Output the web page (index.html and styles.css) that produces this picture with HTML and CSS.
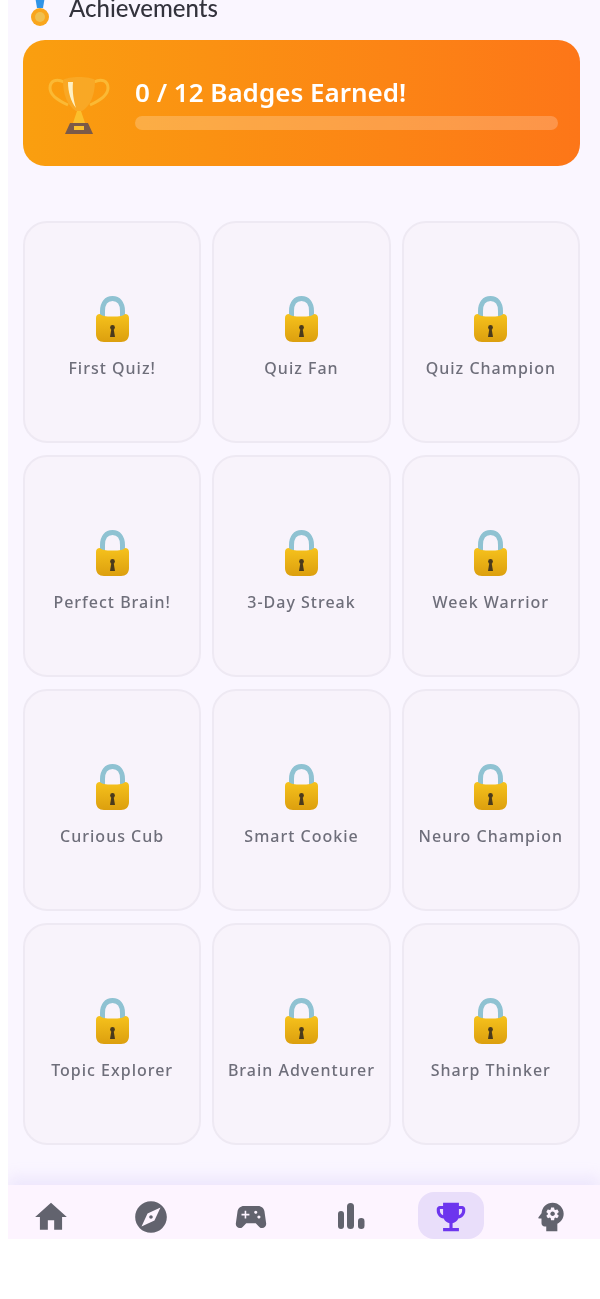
FILE: index.html
```html
<!DOCTYPE html>
<html>
  <head>
    <title>Achievements</title>
    <link rel="stylesheet" href="styles.css">
  </head>
  <body>
    <svg class="defs" width="0" height="0">
      <defs>
        <linearGradient id="lock-body" x1="0" y1="0" x2="0" y2="1">
          <stop offset="0" stop-color="#f6c21c"/>
          <stop offset="1" stop-color="#dc9f0e"/>
        </linearGradient>
      </defs>
      <symbol id="lock" viewBox="0 0 33 46">
        <path d="M6.500 24V15C6.500 7 10.500 2.500 16.500 2.500S26.500 7 26.500 15V24" fill="none" stroke="#8fc2d2" stroke-width="5"/>
        <path d="M4 18C6 20 9 20.500 16.500 20.500S27 20 29 18C31.500 18 33 19.500 33 22V38C33 43 30 46 25 46H8C3 46 0 43 0 38V22C0 19.500 1.500 18 4 18Z" fill="url(#lock-body)"/>
        <circle cx="16.500" cy="31.500" r="2.400" fill="#4a3a1c"/>
        <path d="M15.500 32H17.500L19 41H14Z" fill="#4a3a1c"/>
      </symbol>
    </svg>

    <div class="app">
      <div class="page">
        <div class="page-head">
          <svg class="medal" viewBox="0 0 24 26">
            <path d="M7 -4H17L15 8H9Z" fill="#2f94e6"/>
            <circle cx="12" cy="17" r="9" fill="#f9a61c"/>
            <circle cx="12" cy="17" r="5" fill="#f0c04e"/>
          </svg>
          <h1 class="page-title">Achievements</h1>
        </div>

        <div class="hero">
          <svg class="hero-trophy" viewBox="0 0 62 62">
            <path d="M16 7C8 3 2 6 2 13C2 21 11 26 20 30" fill="none" stroke="#fbb934" stroke-width="3"/>
            <path d="M46 7C54 3 60 6 60 13C60 21 51 26 42 30" fill="none" stroke="#fbb934" stroke-width="3"/>
            <path d="M15 5C20 1 42 1 47 5C47 21 42 31 34 36H28C20 31 15 21 15 5Z" fill="#f9a825"/>
            <path d="M20 7H25C24 17 26 27 28 33C23 27 20 17 20 7Z" fill="#fff1c4"/>
            <path d="M29 36H33L37 48H25Z" fill="#fbbf2d"/>
            <path d="M22 48H40L45 59H17Z" fill="#7b5a48"/>
            <rect x="26" y="51" width="10" height="4" fill="#fbc02d"/>
          </svg>
          <div class="hero-body">
            <div class="hero-title">0 / 12 Badges Earned!</div>
            <div class="hero-bar"></div>
          </div>
        </div>

        <div class="badges">
          <div class="badge"><svg class="badge-lock"><use href="#lock"/></svg><span class="badge-name">First Quiz!</span></div>
          <div class="badge"><svg class="badge-lock"><use href="#lock"/></svg><span class="badge-name">Quiz Fan</span></div>
          <div class="badge"><svg class="badge-lock"><use href="#lock"/></svg><span class="badge-name">Quiz Champion</span></div>
          <div class="badge"><svg class="badge-lock"><use href="#lock"/></svg><span class="badge-name">Perfect Brain!</span></div>
          <div class="badge"><svg class="badge-lock"><use href="#lock"/></svg><span class="badge-name">3-Day Streak</span></div>
          <div class="badge"><svg class="badge-lock"><use href="#lock"/></svg><span class="badge-name">Week Warrior</span></div>
          <div class="badge"><svg class="badge-lock"><use href="#lock"/></svg><span class="badge-name">Curious Cub</span></div>
          <div class="badge"><svg class="badge-lock"><use href="#lock"/></svg><span class="badge-name">Smart Cookie</span></div>
          <div class="badge"><svg class="badge-lock"><use href="#lock"/></svg><span class="badge-name">Neuro Champion</span></div>
          <div class="badge"><svg class="badge-lock"><use href="#lock"/></svg><span class="badge-name">Topic Explorer</span></div>
          <div class="badge"><svg class="badge-lock"><use href="#lock"/></svg><span class="badge-name">Brain Adventurer</span></div>
          <div class="badge"><svg class="badge-lock"><use href="#lock"/></svg><span class="badge-name">Sharp Thinker</span></div>
        </div>
      </div>

      <div class="nav">
        <div class="nav-item">
          <svg class="nav-icon" viewBox="0 0 24 24"><path d="M10 20v-6h4v6h5v-8h3L12 3 2 12h3v8z"/></svg>
        </div>
        <div class="nav-item">
          <svg class="nav-icon" viewBox="0 0 24 24"><path d="M12 10.900c-.61 0-1.100.49-1.100 1.100s.49 1.100 1.100 1.100c.61 0 1.100-.49 1.100-1.100s-.49-1.100-1.100-1.100zM12 2C6.480 2 2 6.480 2 12s4.480 10 10 10 10-4.480 10-10S17.520 2 12 2zm2.190 12.190L6 18l3.810-8.190L18 6l-3.810 8.190z"/></svg>
        </div>
        <div class="nav-item">
          <svg class="nav-icon" viewBox="0 0 24 24"><path d="M21.580 16.090l-1.090-7.660C20.210 6.460 18.520 5 16.530 5H7.470C5.480 5 3.790 6.460 3.510 8.430l-1.090 7.660C2.200 17.630 3.390 19 4.940 19c.68 0 1.320-.27 1.800-.75L9 16h6l2.250 2.250c.48.48 1.130.75 1.800.75 1.560 0 2.750-1.370 2.530-2.910zM11 11H9v2H8v-2H6v-1h2V8h1v2h2v1zm4-1c-.55 0-1-.45-1-1s.45-1 1-1 1 .45 1 1-.45 1-1 1zm2 3c-.55 0-1-.45-1-1s.45-1 1-1 1 .45 1 1-.45 1-1 1z"/></svg>
        </div>
        <div class="nav-item">
          <svg class="nav-icon" viewBox="0 0 38 38">
            <rect x="6" y="13" width="6" height="18" rx="3"/>
            <rect x="15" y="5" width="7" height="26" rx="3.500"/>
            <rect x="26" y="20" width="6.500" height="11" rx="3.200"/>
          </svg>
        </div>
        <div class="nav-item nav-item-active">
          <svg class="nav-icon" viewBox="0 0 24 24"><path d="M19 5h-2V3H7v2H5c-1.100 0-2 .9-2 2v1c0 2.550 1.920 4.630 4.390 4.940.63 1.500 1.980 2.630 3.610 2.960V19H7v2h10v-2h-4v-3.100c1.630-.33 2.980-1.460 3.610-2.960C19.080 12.630 21 10.550 21 8V7c0-1.100-.9-2-2-2zM5 8V7h2v3.820C5.840 10.400 5 9.300 5 8zm14 0c0 1.300-.84 2.400-2 2.820V7h2v1z"/></svg>
        </div>
        <div class="nav-item">
          <svg class="nav-icon" viewBox="0 0 24 24"><path d="M13 8.570c-.79 0-1.430.64-1.430 1.430s.64 1.430 1.430 1.430 1.430-.64 1.430-1.430-.64-1.430-1.430-1.430z"/><path d="M13 3C9.250 3 6.200 5.940 6.020 9.640L4.100 12.200c-.25.33-.01.8.4.8H6v3c0 1.100.9 2 2 2h1v3h7v-4.680c2.360-1.120 4-3.530 4-6.320 0-3.870-3.130-7-7-7zm3 7c0 .13-.01.26-.03.38l.83.66c.07.06.09.16.04.25l-.8 1.390c-.05.09-.16.12-.24.09l-.99-.4c-.21.16-.43.29-.67.39L14 13.830c-.01.1-.1.17-.2.17h-1.600c-.1 0-.18-.07-.2-.17l-.15-1.060c-.25-.1-.47-.23-.68-.39l-.99.4c-.09.03-.2 0-.25-.09l-.8-1.390c-.05-.08-.03-.19.04-.25l.84-.66c-.02-.12-.03-.25-.03-.38 0-.13.02-.26.04-.38l-.85-.66c-.07-.06-.09-.16-.04-.25l.8-1.390c.05-.09.15-.12.24-.09l1 .4c.2-.15.43-.29.67-.39l.15-1.060c.02-.1.1-.17.2-.17h1.600c.1 0 .18.07.2.17l.15 1.060c.24.1.46.23.67.39l1-.4c.09-.03.2 0 .25.09l.8 1.390c.05.09.03.19-.04.25l-.85.66c.03.12.04.25.04.38z"/></svg>
        </div>
      </div>
    </div>
  </body>
</html>
```

FILE: styles.css
```css
html, body {
  margin: 0;
  background: #fff;
}

body {
  height: 1299px;
  overflow: hidden;
  font-family: "Noto Sans", "Lato", sans-serif;
}

.defs {
  display: block;
}

/* the reference is a soft video frame, hence the slight blur */
.app {
  margin-left: 8px;
  height: 1239px;
  display: flex;
  flex-direction: column;
  overflow: hidden;
  background: #faf6ff;
  filter: blur(.5px);
}

.page {
  flex: 1;
  padding: 0 20px 0 15px;
}

.page-head {
  height: 40px;
  display: flex;
  align-items: flex-start;
  gap: 17px;
  padding-left: 5px;
}

.medal {
  width: 24px;
  height: 26px;
  flex: none;
}

.page-title {
  margin: 0;
  font-family: "Lato", sans-serif;
  font-size: 24px;
  line-height: 16px;
  font-weight: 500;
  color: #33333d;
}

.hero {
  height: 126px;
  display: flex;
  align-items: center;
  gap: 25px;
  padding: 0 22px 0 25px;
  border-radius: 22px;
  background: linear-gradient(90deg, #fa9f0f, #fd7618);
}

.hero-trophy {
  width: 62px;
  height: 62px;
  margin-top: 5px;
  flex: none;
}

.hero-body {
  flex: 1;
}

.hero-title {
  font-size: 26px;
  line-height: 32px;
  font-weight: 600;
  color: #fff;
}

.hero-bar {
  height: 14px;
  margin-top: 8px;
  border-radius: 7px;
  background: rgba(255, 255, 255, .22);
}

.badges {
  margin-top: 55px;
  display: grid;
  grid-template-columns: repeat(3, 1fr);
  gap: 12px 11px;
}

.badge {
  height: 222px;
  box-sizing: border-box;
  padding-top: 11px;
  display: flex;
  flex-direction: column;
  align-items: center;
  justify-content: center;
  gap: 15px;
  border: 2px solid #eee9f3;
  border-radius: 24px;
  background: #f8f3fb;
}

.badge-lock {
  width: 33px;
  height: 46px;
}

.badge-name {
  font-size: 16px;
  line-height: 22px;
  font-weight: 500;
  letter-spacing: 1px;
  color: #6e6e7a;
  white-space: nowrap;
}

.nav {
  height: 54px;
  flex: none;
  display: flex;
  gap: 34px;
  padding: 7px 16px 0 10px;
  box-sizing: border-box;
  background: #fdf4ff;
  box-shadow: 0 -8px 14px rgba(190, 170, 240, .2);
}

.nav-item {
  width: 66px;
  padding-top: 3px;
  display: flex;
  align-items: center;
  justify-content: center;
  border-radius: 16px;
  color: #62636e;
}

.nav-item-active {
  background: #e9defa;
  color: #6d35ee;
}

.nav-icon {
  width: 38px;
  height: 38px;
  fill: currentColor;
}
```
